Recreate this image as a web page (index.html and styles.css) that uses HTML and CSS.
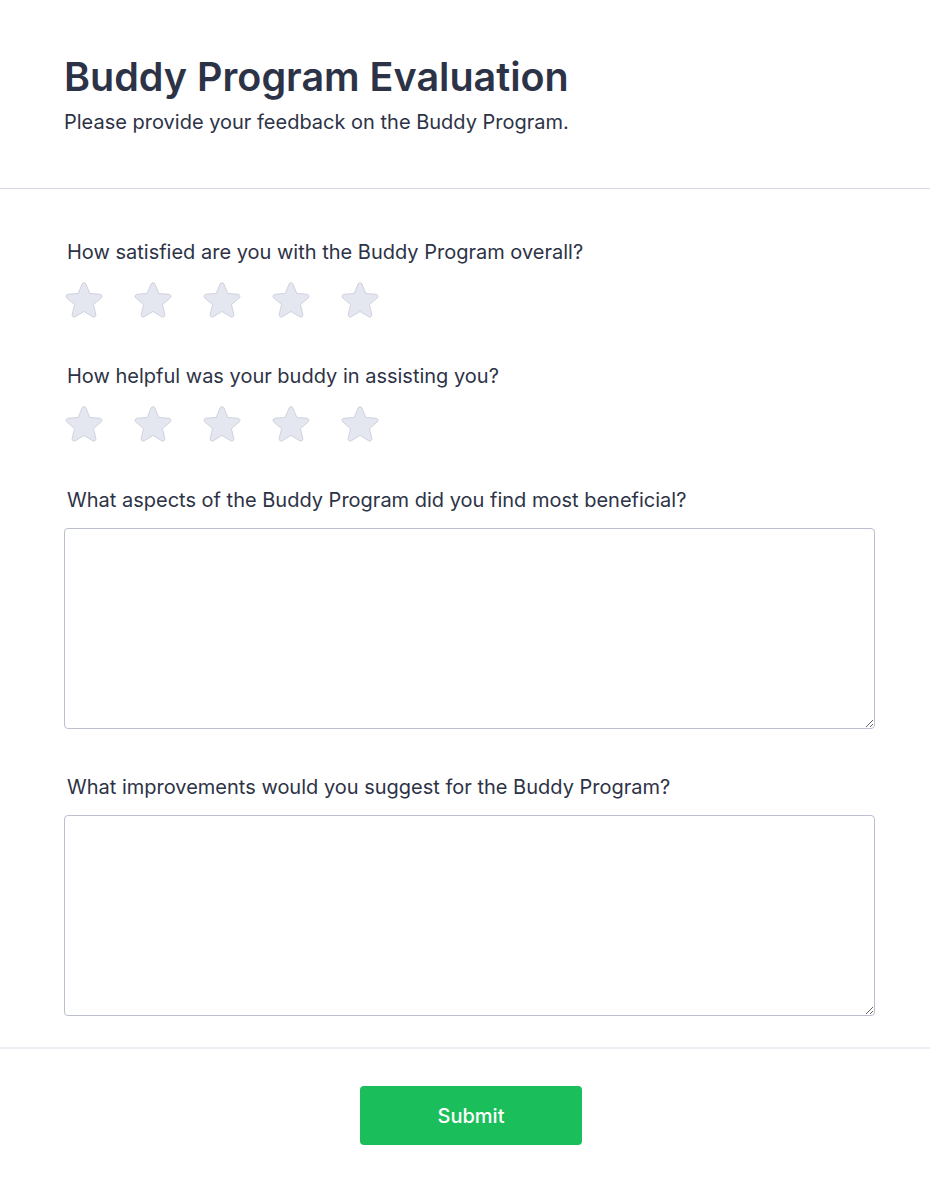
FILE: index.html
```html
<!DOCTYPE html>
<html lang="en">
<head>
<meta charset="utf-8">
<title>Buddy Program Evaluation</title>
<link rel="stylesheet" href="styles.css">
</head>
<body>
<div class="page">
  <header class="header">
    <h1 class="title">Buddy Program Evaluation</h1>
    <p class="subtitle">Please provide your feedback on the Buddy Program.</p>
  </header>
  <form class="form">
    <div class="fields">
      <div class="field">
        <label class="label">How satisfied are you with the Buddy Program overall?</label>
        <div class="stars">
          <svg class="star" viewBox="1.2 2 17.6 16.6"><path d="M10.868 2.884c-.321-.772-1.415-.772-1.736 0l-1.830 4.401-4.753.381c-.833.067-1.171 1.107-.536 1.651l3.62 3.102-1.106 4.637c-.194.813.691 1.456 1.405 1.02L10 15.591l4.069 2.485c.713.436 1.598-.207 1.404-1.020l-1.106-4.637 3.62-3.102c.635-.544.297-1.584-.536-1.65l-4.752-.382-1.831-4.401z"/></svg>
          <svg class="star" viewBox="1.2 2 17.6 16.6"><path d="M10.868 2.884c-.321-.772-1.415-.772-1.736 0l-1.830 4.401-4.753.381c-.833.067-1.171 1.107-.536 1.651l3.62 3.102-1.106 4.637c-.194.813.691 1.456 1.405 1.02L10 15.591l4.069 2.485c.713.436 1.598-.207 1.404-1.020l-1.106-4.637 3.62-3.102c.635-.544.297-1.584-.536-1.65l-4.752-.382-1.831-4.401z"/></svg>
          <svg class="star" viewBox="1.2 2 17.6 16.6"><path d="M10.868 2.884c-.321-.772-1.415-.772-1.736 0l-1.830 4.401-4.753.381c-.833.067-1.171 1.107-.536 1.651l3.62 3.102-1.106 4.637c-.194.813.691 1.456 1.405 1.02L10 15.591l4.069 2.485c.713.436 1.598-.207 1.404-1.020l-1.106-4.637 3.62-3.102c.635-.544.297-1.584-.536-1.65l-4.752-.382-1.831-4.401z"/></svg>
          <svg class="star" viewBox="1.2 2 17.6 16.6"><path d="M10.868 2.884c-.321-.772-1.415-.772-1.736 0l-1.830 4.401-4.753.381c-.833.067-1.171 1.107-.536 1.651l3.62 3.102-1.106 4.637c-.194.813.691 1.456 1.405 1.02L10 15.591l4.069 2.485c.713.436 1.598-.207 1.404-1.020l-1.106-4.637 3.62-3.102c.635-.544.297-1.584-.536-1.65l-4.752-.382-1.831-4.401z"/></svg>
          <svg class="star" viewBox="1.2 2 17.6 16.6"><path d="M10.868 2.884c-.321-.772-1.415-.772-1.736 0l-1.830 4.401-4.753.381c-.833.067-1.171 1.107-.536 1.651l3.62 3.102-1.106 4.637c-.194.813.691 1.456 1.405 1.02L10 15.591l4.069 2.485c.713.436 1.598-.207 1.404-1.020l-1.106-4.637 3.62-3.102c.635-.544.297-1.584-.536-1.65l-4.752-.382-1.831-4.401z"/></svg>
        </div>
      </div>
      <div class="field">
        <label class="label">How helpful was your buddy in assisting you?</label>
        <div class="stars">
          <svg class="star" viewBox="1.2 2 17.6 16.6"><path d="M10.868 2.884c-.321-.772-1.415-.772-1.736 0l-1.830 4.401-4.753.381c-.833.067-1.171 1.107-.536 1.651l3.62 3.102-1.106 4.637c-.194.813.691 1.456 1.405 1.02L10 15.591l4.069 2.485c.713.436 1.598-.207 1.404-1.020l-1.106-4.637 3.62-3.102c.635-.544.297-1.584-.536-1.65l-4.752-.382-1.831-4.401z"/></svg>
          <svg class="star" viewBox="1.2 2 17.6 16.6"><path d="M10.868 2.884c-.321-.772-1.415-.772-1.736 0l-1.830 4.401-4.753.381c-.833.067-1.171 1.107-.536 1.651l3.62 3.102-1.106 4.637c-.194.813.691 1.456 1.405 1.02L10 15.591l4.069 2.485c.713.436 1.598-.207 1.404-1.020l-1.106-4.637 3.62-3.102c.635-.544.297-1.584-.536-1.65l-4.752-.382-1.831-4.401z"/></svg>
          <svg class="star" viewBox="1.2 2 17.6 16.6"><path d="M10.868 2.884c-.321-.772-1.415-.772-1.736 0l-1.830 4.401-4.753.381c-.833.067-1.171 1.107-.536 1.651l3.62 3.102-1.106 4.637c-.194.813.691 1.456 1.405 1.02L10 15.591l4.069 2.485c.713.436 1.598-.207 1.404-1.020l-1.106-4.637 3.62-3.102c.635-.544.297-1.584-.536-1.65l-4.752-.382-1.831-4.401z"/></svg>
          <svg class="star" viewBox="1.2 2 17.6 16.6"><path d="M10.868 2.884c-.321-.772-1.415-.772-1.736 0l-1.830 4.401-4.753.381c-.833.067-1.171 1.107-.536 1.651l3.62 3.102-1.106 4.637c-.194.813.691 1.456 1.405 1.02L10 15.591l4.069 2.485c.713.436 1.598-.207 1.404-1.020l-1.106-4.637 3.62-3.102c.635-.544.297-1.584-.536-1.65l-4.752-.382-1.831-4.401z"/></svg>
          <svg class="star" viewBox="1.2 2 17.6 16.6"><path d="M10.868 2.884c-.321-.772-1.415-.772-1.736 0l-1.830 4.401-4.753.381c-.833.067-1.171 1.107-.536 1.651l3.62 3.102-1.106 4.637c-.194.813.691 1.456 1.405 1.02L10 15.591l4.069 2.485c.713.436 1.598-.207 1.404-1.020l-1.106-4.637 3.62-3.102c.635-.544.297-1.584-.536-1.65l-4.752-.382-1.831-4.401z"/></svg>
        </div>
      </div>
      <div class="field">
        <label class="label" for="q3">What aspects of the Buddy Program did you find most beneficial?</label>
        <textarea id="q3" class="textarea"></textarea>
      </div>
      <div class="field">
        <label class="label" for="q4">What improvements would you suggest for the Buddy Program?</label>
        <textarea id="q4" class="textarea"></textarea>
      </div>
    </div>
    <div class="footer">
      <button type="button" class="submit">Submit</button>
    </div>
  </form>
</div>
</body>
</html>
```

FILE: styles.css
```css
* { box-sizing: border-box; }
html, body { margin: 0; padding: 0; background: #ffffff; }
body {
  font-family: Inter, "Noto Sans", sans-serif;
  color: #2d3346;
}
.page { width: 930px; }
.header {
  padding: 53px 64px 52px;
  border-bottom: 1px solid #d8dae5;
}
.title {
  margin: 0;
  font-size: 39.5px;
  line-height: 48px;
  font-weight: 600;
  color: #2d3346;
}
.subtitle {
  margin: 7px 0 0;
  font-size: 20px;
  line-height: 28px;
  font-weight: 400;
  color: #2d3346;
}
.fields {
  padding: 49px 55px 31px 64px;
  display: flex;
  flex-direction: column;
  gap: 44px;
}
.field {
  display: flex;
  flex-direction: column;
  gap: 15px;
}
.label {
  display: block;
  padding-left: 3px;
  font-size: 20px;
  line-height: 28px;
  font-weight: 400;
  color: #2d3346;
}
.stars {
  display: flex;
  gap: 31px;
  padding: 1px 0 0 1px;
}
.star {
  width: 38px;
  height: 36px;
  fill: #e5e7f0;
  stroke: #cdd0dc;
  stroke-width: 0.45;
  stroke-linejoin: round;
}
.textarea {
  display: block;
  width: 811px;
  height: 201px;
  margin-top: -1px;
  border: 1px solid #bcbfd0;
  border-radius: 4px;
  padding: 8px 12px;
  font-family: inherit;
  font-size: 16px;
  resize: vertical;
}
.footer {
  border-top: 2px solid #ededf3;
  padding: 37px 55px 50px 67px;
  display: flex;
  justify-content: center;
}
.submit {
  width: 222px;
  height: 59px;
  border: none;
  border-radius: 4px;
  background: #1abe5b;
  color: #ffffff;
  font-family: inherit;
  font-size: 20px;
  font-weight: 500;
  cursor: pointer;
}
```
